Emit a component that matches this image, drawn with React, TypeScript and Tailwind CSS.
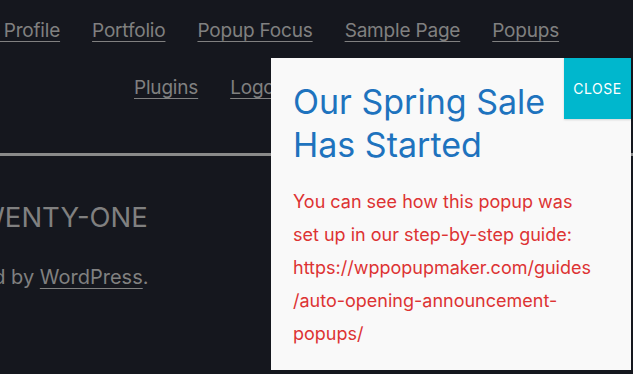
import React from "react";

const navTop = ["My Profile", "Portfolio", "Popup Focus", "Sample Page", "Popups"];
const navBottom = ["Plugins", "Logout"];

const App = () => {
  return (
    <div className="relative w-[633px] h-[374px] overflow-hidden bg-[#15171e] font-['Inter',sans-serif] text-[#808080]">
      <header className="pt-[19px]">
        <nav className="flex gap-[32px] -ml-[29px] text-[19px] leading-[24px] tracking-[-0.01em]">
          {navTop.map((item) => (
            <a key={item} href="#" className="underline underline-offset-[4px] decoration-1 whitespace-nowrap">
              {item}
            </a>
          ))}
        </nav>
        <nav className="flex gap-[32px] ml-[134px] mt-[33px] text-[19px] leading-[24px] tracking-[-0.01em]">
          {navBottom.map((item) => (
            <a key={item} href="#" className="underline underline-offset-[4px] decoration-1 whitespace-nowrap">
              {item}
            </a>
          ))}
        </nav>
      </header>
      <div className="mt-[53px] h-[3px] bg-[#8a8a8a]" />
      <footer className="pt-[45px]">
        <div className="-ml-[40px] text-[27.5px] leading-[32px] whitespace-nowrap">TWENTY-ONE</div>
        <p className="mt-[32px] -ml-[155px] text-[20px] leading-[24px] whitespace-nowrap">
          Proudly powered by{" "}
          <a href="#" className="underline underline-offset-[4px] decoration-1">
            WordPress
          </a>
          .
        </p>
      </footer>

      <div className="absolute left-[271px] top-[58px] w-[360px] h-[312px] bg-[#f9f9f9] pl-[22px] pr-[14px] pt-[22px]">
        <h2 className="text-[#1e73be] text-[34px] leading-[43px] font-normal pr-[46px]">
          Our Spring Sale Has Started
        </h2>
        <p className="mt-[19px] text-[#dd3333] text-[18px] leading-[33px] whitespace-nowrap">
          You can see how this popup was
          <br />
          set up in our step-by-step guide:
          <br />
          https://wppopupmaker.com/guides
          <br />
          /auto-opening-announcement-
          <br />
          popups/
        </p>
        <button className="absolute right-0 top-0 w-[67px] h-[61px] bg-[#00b7cd] text-white text-[14px] uppercase tracking-[0.5px] shadow-[0_1px_2px_rgba(0,0,0,0.15)]">
          Close
        </button>
      </div>
    </div>
  );
};

export default App;
